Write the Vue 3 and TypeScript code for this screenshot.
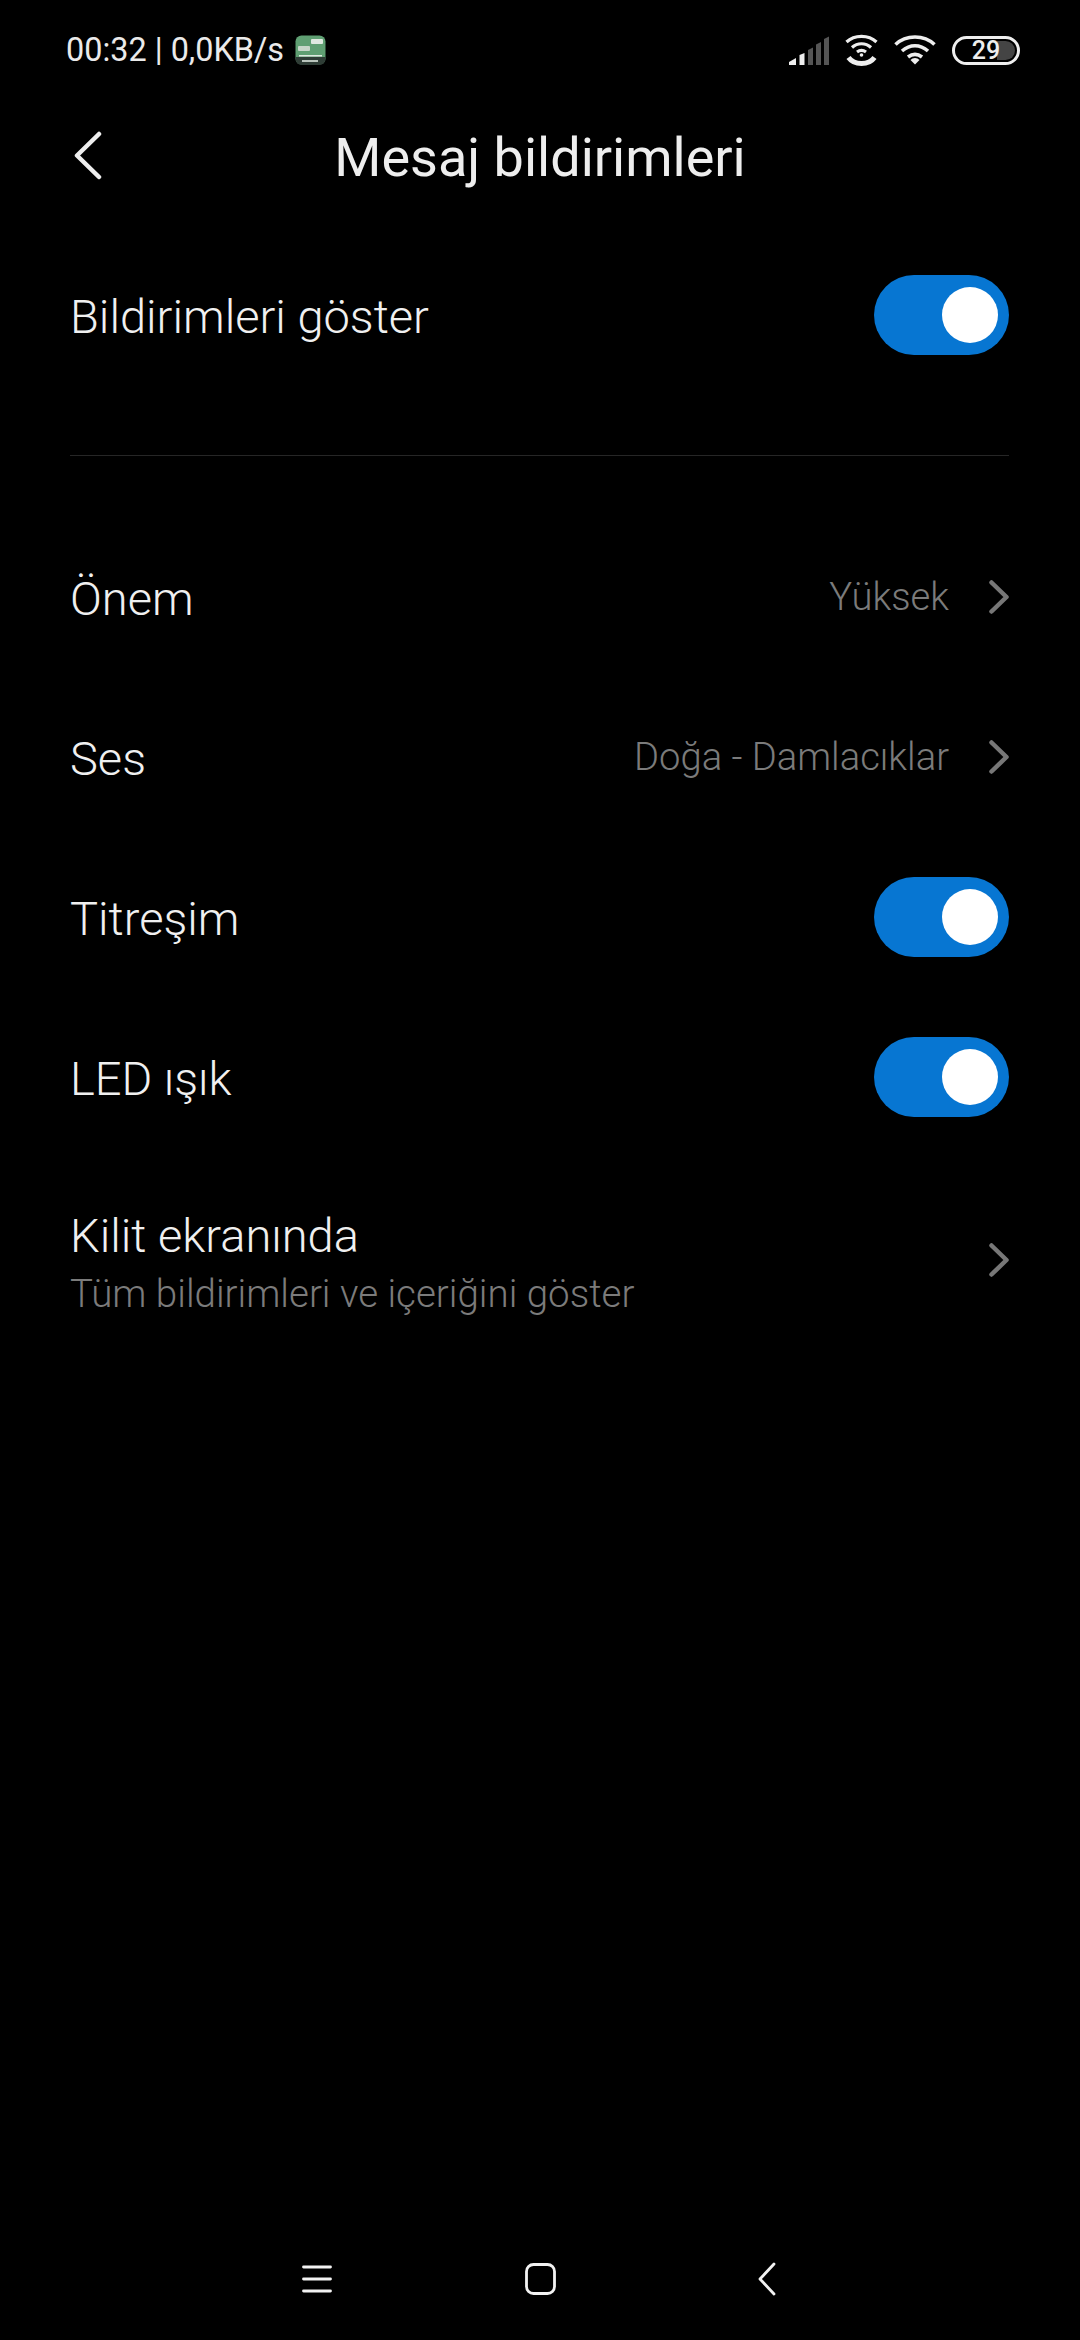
<script setup lang="ts">
interface SettingRow {
  title: string;
  value?: string;
  subtitle?: string;
  toggle?: boolean;
}

const rows: SettingRow[] = [
  { title: "Önem", value: "Yüksek" },
  { title: "Ses", value: "Doğa - Damlacıklar" },
  { title: "Titreşim", toggle: true },
  { title: "LED ışık", toggle: true },
  { title: "Kilit ekranında", subtitle: "Tüm bildirimleri ve içeriğini göster" },
];
</script>

<template>
  <div class="screen">
    <div class="status-bar">
      <div class="status-left">
        <span>00:32 | 0,0KB/s</span>
        <svg class="sim-icon" width="31" height="30" viewBox="0 0 31 30">
          <rect x="0.500" y="0.500" width="30" height="29" rx="6" fill="#5f9f72" />
          <path d="M0.500 22h30v2a6 6 0 0 1-6 6H6.500a6 6 0 0 1-6-6z" fill="#2f3d36" />
          <rect x="16" y="4" width="12" height="5" rx="1" fill="#dfe8e0" />
          <rect x="3" y="11" width="12" height="5" rx="1" fill="#c6d6c8" />
          <rect x="4" y="20" width="23" height="1.500" fill="#dfe8e0" />
          <rect x="7" y="25" width="16" height="2" fill="#b9c4bc" />
        </svg>
      </div>
      <div class="status-right">
        <svg width="40" height="29" viewBox="0 0 40 29">
          <path d="M0 29v-3l7-4v7z" fill="#eee" />
          <path d="M10.500 29V19l5-2v12z" fill="#eee" />
          <path d="M19 29V14l5-2.500V29zM27 29V8.500l5-2.500v23zM35 29V3l5-2.500V29z" fill="#555" />
        </svg>
        <svg class="hotspot" width="33" height="32" viewBox="0 0 33 32" fill="none" stroke="#eee" stroke-width="3.200">
          <path d="M1.500 8C9.500 0.500 23.500 0.500 31.500 8" />
          <path d="M7 13.500C12.500 8.500 20.500 8.500 26 13.500" />
          <path d="M12 18C15 15.800 18 15.800 21 18" />
          <circle cx="16.500" cy="21" r="1.800" fill="#eee" stroke="none" />
          <path d="M3.500 23.500C7.500 29 12.500 29.500 16.500 29.500S25.500 29 29.500 23.500" stroke-width="5" />
        </svg>
        <svg width="42" height="30" viewBox="0 0 42 30" fill="none" stroke="#eee" stroke-width="3.600">
          <path d="M1.500 9.500C12 -0.500 30 -0.500 40.500 9.500" />
          <path d="M8 16C16 9 26 9 34 16" />
          <path d="M14 22C18.500 18.500 23.500 18.500 28 22" />
          <path d="M21 29.500l-4.500-4.500a6 6 0 0 1 9 0z" fill="#eee" stroke="none" />
        </svg>
        <div class="battery">
          <span class="battery-rest"></span>
          <span class="battery-num">29</span>
        </div>
      </div>
    </div>

    <header class="top-bar">
      <svg class="back" width="32" height="50" viewBox="0 0 32 50" fill="none" stroke="#eee" stroke-width="4.500" stroke-linecap="round" stroke-linejoin="round">
        <path d="M27 3L5 24.500L27 46" />
      </svg>
      <h1>Mesaj bildirimleri</h1>
    </header>

    <div class="row first-row">
      <div class="labels">
        <span class="title">Bildirimleri göster</span>
      </div>
      <div class="switch"><span class="knob"></span></div>
    </div>

    <div class="divider"></div>

    <div
      v-for="row in rows"
      :key="row.title"
      class="row"
      :class="{ tall: row.subtitle }"
    >
      <div class="labels">
        <span class="title">{{ row.title }}</span>
        <span v-if="row.subtitle" class="subtitle">{{ row.subtitle }}</span>
      </div>
      <div v-if="row.toggle" class="switch"><span class="knob"></span></div>
      <div v-else class="right">
        <span v-if="row.value" class="value">{{ row.value }}</span>
        <svg width="20" height="34" viewBox="0 0 20 34" fill="none" stroke="#777" stroke-width="4.500" stroke-linecap="round" stroke-linejoin="round">
          <path d="M2.500 2.500L17.500 17L2.500 31.500" />
        </svg>
      </div>
    </div>

    <nav class="nav-bar">
      <svg class="nav-menu" width="30" height="30" viewBox="0 0 30 30" stroke="#f2f2f2" stroke-width="2.800" stroke-linecap="round">
        <path d="M1.500 3h27M1.500 15h27M1.500 27h27" />
      </svg>
      <svg class="nav-home" width="31" height="32" viewBox="0 0 31 32" fill="none" stroke="#f2f2f2" stroke-width="2.800">
        <rect x="1.500" y="1.500" width="28" height="29" rx="7" />
      </svg>
      <svg class="nav-back" width="18" height="34" viewBox="0 0 18 34" fill="none" stroke="#f2f2f2" stroke-width="2.800" stroke-linecap="round" stroke-linejoin="round">
        <path d="M16 2L2 17L16 32" />
      </svg>
    </nav>
  </div>
</template>

<style>
html,
body {
  margin: 0;
  background: #000;
}
</style>

<style scoped>
.screen {
  width: 1080px;
  height: 2340px;
  background: #000;
  color: #eeeeee;
  font-family: Roboto, "Noto Sans", sans-serif;
  display: flex;
  flex-direction: column;
  overflow: hidden;
}
.status-bar {
  height: 100px;
  padding: 0 60px 0 66px;
  display: flex;
  justify-content: space-between;
  align-items: center;
  flex-shrink: 0;
}
.status-left {
  display: flex;
  align-items: center;
  gap: 11px;
  font-size: 32.4px;
  color: #eaeaea;
}
.status-right {
  display: flex;
  align-items: center;
  gap: 16px;
}
.battery {
  position: relative;
  box-sizing: border-box;
  width: 68px;
  height: 29px;
  border: 3px solid #eee;
  border-radius: 15px;
  display: flex;
  align-items: center;
  justify-content: center;
}
.battery-rest {
  position: absolute;
  right: 2px;
  top: 2px;
  bottom: 2px;
  width: 18px;
  background: #444;
  border-radius: 0 10px 10px 0;
}
.battery-num {
  position: relative;
  font-size: 25px;
  font-weight: 500;
  line-height: 1;
  color: #eee;
}
.top-bar {
  position: relative;
  height: 114px;
  display: flex;
  align-items: center;
  justify-content: center;
  flex-shrink: 0;
}
.top-bar h1 {
  margin: 0;
  font-size: 54px;
  font-weight: 400;
  color: #eeeeee;
}
.back {
  position: absolute;
  left: 72px;
  top: 31px;
}
.row {
  height: 160px;
  flex-shrink: 0;
  padding: 0 71px 0 70px;
  display: flex;
  align-items: center;
  justify-content: space-between;
}
.row.tall {
  height: 206px;
}
.first-row {
  margin-top: 21px;
}
.labels {
  display: flex;
  flex-direction: column;
  padding-top: 4px;
}
.tall .labels {
  padding-top: 12px;
}
.title {
  font-size: 47px;
  font-weight: 300;
  line-height: 56px;
  color: #f0f0f0;
}
.subtitle {
  font-size: 38.5px;
  font-weight: 300;
  line-height: 60px;
  color: #7b7b7b;
}
.value {
  font-size: 38.2px;
  font-weight: 300;
  color: #7b7b7b;
}
.right {
  display: flex;
  align-items: center;
  gap: 40px;
}
.switch {
  width: 135px;
  height: 80px;
  border-radius: 40px;
  background: #0776d2;
  position: relative;
}
.knob {
  position: absolute;
  right: 11px;
  top: 12px;
  width: 56px;
  height: 56px;
  border-radius: 50%;
  background: #fff;
}
.divider {
  height: 1px;
  margin: 60px 71px 61px 70px;
  background: #262626;
  flex-shrink: 0;
}
.nav-bar {
  margin-top: auto;
  margin-bottom: 45px;
  height: 32px;
  padding-left: 302px;
  display: flex;
  align-items: center;
  flex-shrink: 0;
}
.nav-home {
  margin-left: 193px;
}
.nav-back {
  margin-left: 202px;
}
</style>
